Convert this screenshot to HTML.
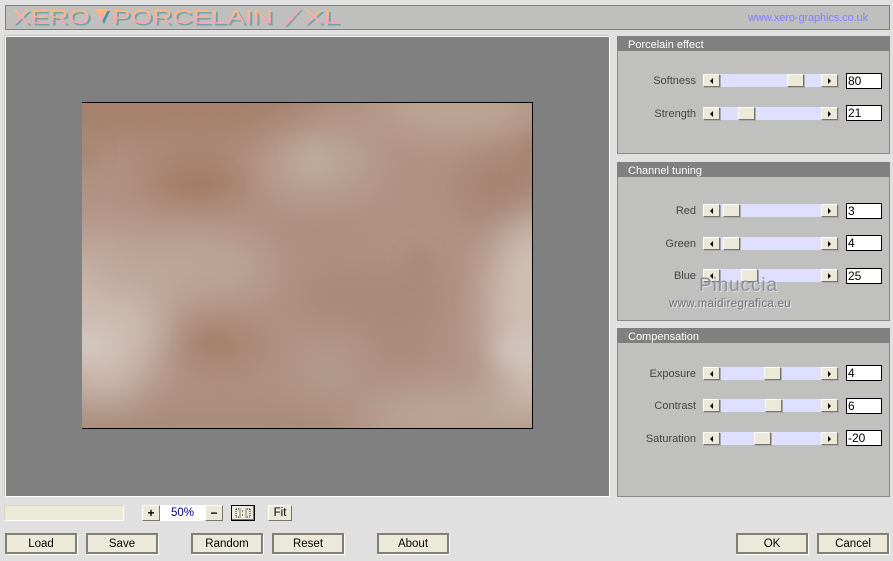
<!DOCTYPE html>
<html><head><meta charset="utf-8"><style>
html,body{margin:0;padding:0}
body{width:893px;height:561px;position:relative;overflow:hidden;background:#e0e0e0;font:11px "Liberation Sans",sans-serif;color:#000}
div,span{position:absolute;box-sizing:border-box}
.pn{left:617px;width:273px;background:#c0c0be;border:1px solid #8a8a8a}
.hd{left:617px;width:273px;height:15px;background:#808080;color:#fff;padding-left:11px;padding-top:2px;line-height:14px;font-size:11px}
.lb{left:610px;width:86px;text-align:right;color:#444;line-height:14px;height:14px}
.tr{left:720px;width:101px;height:13px;background:#dfdfff}
.b{width:17px;height:13px;background:#ece9d8;border-top:1px solid #fff;border-left:1px solid #fff;border-right:1px solid #77776a;border-bottom:1px solid #77776a;box-shadow:1px 1px 0 #aaa}
.l:after,.r:after{content:"";position:absolute;top:3px;left:6px;border:3px solid transparent;border-left:0;border-right:3px solid #000}
.r:after{border-right:0;border-left:3px solid #000}
.in{left:846px;width:36px;height:16px;background:#fff;border:1px solid #000;padding-left:1px;line-height:14px;font-size:12px}
.bt{top:533px;width:72px;height:21px;background:#ece9d8;border:2px solid #808074;text-align:center;line-height:18px;font-size:11.5px;box-shadow:1px 1px 0 #fff}
.sb{top:505px;height:16px;background:#ece9d8;border-top:1px solid #fff;border-left:1px solid #fff;border-right:1px solid #77776a;border-bottom:1px solid #77776a;text-align:center;line-height:14px;font-size:12px}
</style></head><body>

<div style="left:5px;top:5px;width:885px;height:25px;background:#bfc0be;border:1px solid #808080"></div>
<svg style="position:absolute;left:0;top:0" width="400" height="32">
<defs><linearGradient id="g" x1="0" y1="0" x2="0" y2="1"><stop offset="0" stop-color="#ffc060"/><stop offset="0.4" stop-color="#ffb0a0"/><stop offset="1" stop-color="#ff94c8"/></linearGradient></defs>
<g font-family="Liberation Sans" font-size="19" fill="#4d9a9e" opacity=".7">
<text x="14" y="25.5" textLength="78" lengthAdjust="spacingAndGlyphs">XERO</text>
<text x="114" y="25.5" textLength="161" lengthAdjust="spacingAndGlyphs">PORCELAIN</text>
<text x="306" y="25.5" textLength="36" lengthAdjust="spacingAndGlyphs">XL</text>
</g>
<polygon points="97,11 110,11 104,24" fill="#3f9aa0"/>
<polygon points="285,27 301,10 303,10 288,27" fill="#7aa"/>
<g font-family="Liberation Sans" font-size="19" fill="url(#g)">
<text x="12" y="23.5" textLength="78" lengthAdjust="spacingAndGlyphs">XERO</text>
<text x="112" y="23.5" textLength="161" lengthAdjust="spacingAndGlyphs">PORCELAIN</text>
<text x="304" y="23.5" textLength="36" lengthAdjust="spacingAndGlyphs">XL</text>
</g>
<polygon points="95,9 108,9 102,22" fill="url(#g)"/>
<polygon points="283,26 299,9 301,9 286,26" fill="#ffa0c0"/>
</svg>
<div style="left:748px;top:11px;width:130px;height:14px;color:#8080ff;font-size:11px;line-height:14px;white-space:nowrap;letter-spacing:-.1px">www.xero-graphics.co.uk</div>

<div style="left:4px;top:35px;width:606px;height:462px;background:#808080;border:1px solid #fff;border-top:1px solid #c4c4bc;border-left:1px solid #c4c4bc;box-shadow:inset 1px 1px 0 #fff"></div>
<svg style="position:absolute;left:82px;top:102px" width="451" height="327" viewBox="0 0 451 327">
<defs><filter id="b1" x="-30%" y="-30%" width="160%" height="160%"><feGaussianBlur stdDeviation="20"/></filter>
<filter id="b2" x="-50%" y="-50%" width="200%" height="200%"><feGaussianBlur stdDeviation="10"/></filter>
<clipPath id="c"><rect x="0" y="1" width="450" height="325"/></clipPath></defs>
<rect width="451" height="327" fill="#000"/>
<g clip-path="url(#c)">
<rect width="451" height="327" fill="#b09283"/>
<g filter="url(#b1)">
<rect x="-40" y="-40" width="280" height="80" fill="#a5816d"/>
<rect x="-40" y="305" width="300" height="60" fill="#a88a78"/>
<ellipse cx="20" cy="215" rx="60" ry="85" fill="#cdbdb2"/>
<ellipse cx="90" cy="165" rx="100" ry="35" fill="#bda697"/>
<ellipse cx="455" cy="210" rx="50" ry="100" fill="#cfbfb4"/>
<ellipse cx="235" cy="60" rx="55" ry="36" fill="#bba697"/>
<ellipse cx="375" cy="5" rx="80" ry="25" fill="#bfa898"/>
<ellipse cx="420" cy="85" rx="45" ry="40" fill="#a48371"/>
<ellipse cx="115" cy="80" rx="60" ry="24" fill="#a47f6b"/>
<ellipse cx="290" cy="195" rx="85" ry="28" fill="#a88978"/>
<ellipse cx="140" cy="245" rx="45" ry="24" fill="#a5836f"/>
<ellipse cx="235" cy="130" rx="50" ry="18" fill="#aa8c7c"/>
<ellipse cx="320" cy="245" rx="30" ry="35" fill="#a98b7c"/>
<ellipse cx="370" cy="315" rx="90" ry="25" fill="#bca798"/>
<ellipse cx="245" cy="270" rx="30" ry="25" fill="#b49c8d"/>
</g>
<g filter="url(#b2)">
<ellipse cx="5" cy="243" rx="26" ry="14" fill="#d4c9c3" opacity=".8"/>
<ellipse cx="445" cy="248" rx="30" ry="16" fill="#d2c6c0" opacity=".8"/>
<ellipse cx="232" cy="58" rx="18" ry="16" fill="#c3ae9e" opacity=".6"/>
<ellipse cx="115" cy="82" rx="30" ry="9" fill="#a0765f" opacity=".7"/>
<ellipse cx="2" cy="52" rx="12" ry="12" fill="#a47f6a" opacity=".8"/>
<ellipse cx="448" cy="52" rx="12" ry="20" fill="#a37f6b" opacity=".8"/>
<ellipse cx="130" cy="240" rx="22" ry="8" fill="#a37a63" opacity=".7"/>
<ellipse cx="338" cy="160" rx="9" ry="7" fill="#9c7a60" opacity=".8"/>
</g>
</g>
</svg>

<div class="pn" style="top:36px;height:118px"></div><div class="hd" style="top:36px">Porcelain effect</div>
<div class="pn" style="top:162px;height:159px"></div><div class="hd" style="top:162px">Channel tuning</div>
<div class="pn" style="top:328px;height:169px"></div><div class="hd" style="top:328px">Compensation</div>

<div class="lb" style="top:74px">Softness</div><div class="tr" style="top:74px"></div><div class="b l" style="left:703px;top:74px"></div><div class="b" style="left:787px;top:74px"></div><div class="b r" style="left:821px;top:74px"></div><div class="in" style="top:73px">80</div>
<div class="lb" style="top:107px">Strength</div><div class="tr" style="top:107px"></div><div class="b l" style="left:703px;top:107px"></div><div class="b" style="left:738px;top:107px"></div><div class="b r" style="left:821px;top:107px"></div><div class="in" style="top:105px">21</div>

<div class="lb" style="top:204px">Red</div><div class="tr" style="top:204px"></div><div class="b l" style="left:703px;top:204px"></div><div class="b" style="left:723px;top:204px"></div><div class="b r" style="left:821px;top:204px"></div><div class="in" style="top:203px">3</div>
<div class="lb" style="top:237px">Green</div><div class="tr" style="top:237px"></div><div class="b l" style="left:703px;top:237px"></div><div class="b" style="left:723px;top:237px"></div><div class="b r" style="left:821px;top:237px"></div><div class="in" style="top:235px">4</div>
<div class="lb" style="top:269px">Blue</div><div class="tr" style="top:269px"></div><div class="b l" style="left:703px;top:269px"></div><div class="b" style="left:741px;top:269px"></div><div class="b r" style="left:821px;top:269px"></div><div class="in" style="top:268px">25</div>

<div class="lb" style="top:367px">Exposure</div><div class="tr" style="top:367px"></div><div class="b l" style="left:703px;top:367px"></div><div class="b" style="left:764px;top:367px"></div><div class="b r" style="left:821px;top:367px"></div><div class="in" style="top:365px">4</div>
<div class="lb" style="top:399px">Contrast</div><div class="tr" style="top:399px"></div><div class="b l" style="left:703px;top:399px"></div><div class="b" style="left:765px;top:399px"></div><div class="b r" style="left:821px;top:399px"></div><div class="in" style="top:398px">6</div>
<div class="lb" style="top:432px">Saturation</div><div class="tr" style="top:432px"></div><div class="b l" style="left:703px;top:432px"></div><div class="b" style="left:754px;top:432px"></div><div class="b r" style="left:821px;top:432px"></div><div class="in" style="top:430px">-20</div>

<div style="left:699px;top:275px;width:80px;height:22px;font-size:19px;line-height:22px;color:#8d8f9c;letter-spacing:.9px;text-shadow:1px 1px 0 #e0e0e0;white-space:nowrap">Pinuccia</div>
<div style="left:669px;top:297px;width:125px;height:14px;font-size:11.5px;line-height:14px;color:#70707a;letter-spacing:.3px;text-shadow:1px 1px 0 #e4e4e4;white-space:nowrap">www.maidiregrafica.eu</div>

<div style="left:4px;top:505px;width:120px;height:16px;background:#ece9d8;border:1px solid #d8d5c4;border-right-color:#fff;border-bottom-color:#fff"></div>
<div class="sb" style="left:142px;width:18px;font-weight:bold">+</div>
<div style="left:160px;top:505px;width:45px;height:16px;background:#fff;color:#000080;text-align:center;line-height:17px;font-size:11.5px">50%</div>
<div class="sb" style="left:205px;width:18px;font-weight:bold">−</div>
<div style="left:231px;top:505px;width:24px;height:16px;background:#ece9d8;border:1px solid #000;box-shadow:inset -1px -1px 0 #77776a"></div>
<svg style="position:absolute;left:235px;top:508px" width="17" height="11"><path d="M1 1h3M1 9h3M1 1v8M15 1h-3M15 9h-3M15 1v8M5 .5v9M11 .5v9M7 3h2M7 7h2" stroke="#222" fill="none" stroke-dasharray="1 1"/></svg>
<div class="sb" style="left:268px;width:24px;font-size:11.5px">Fit</div>

<div class="bt" style="left:5px">Load</div>
<div class="bt" style="left:86px">Save</div>
<div class="bt" style="left:191px">Random</div>
<div class="bt" style="left:272px">Reset</div>
<div class="bt" style="left:377px">About</div>
<div class="bt" style="left:736px">OK</div>
<div class="bt" style="left:817px">Cancel</div>
</body></html>
